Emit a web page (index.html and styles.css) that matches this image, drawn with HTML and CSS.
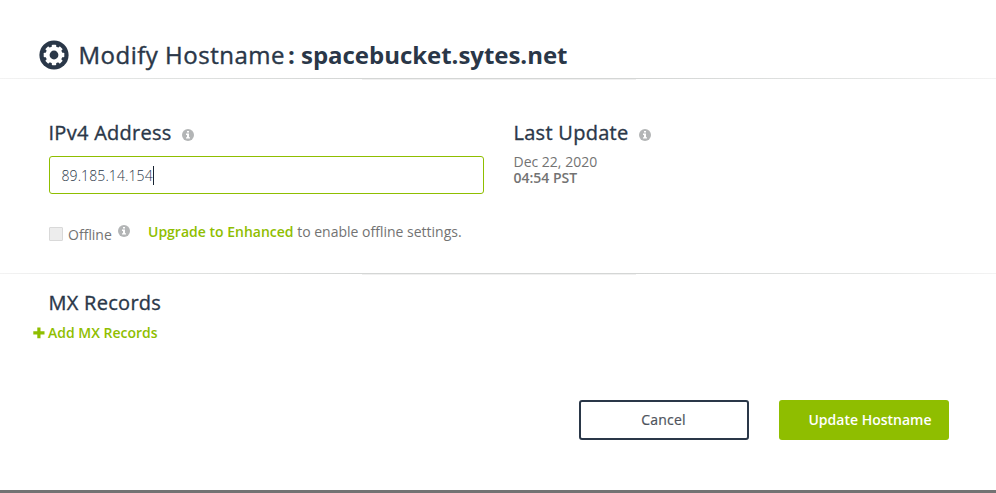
FILE: index.html
```html
<!DOCTYPE html>
<html lang="en">
<head>
<meta charset="utf-8">
<title>Modify Hostname</title>
<link rel="stylesheet" href="styles.css">
</head>
<body>
<svg class="defs" aria-hidden="true">
  <symbol id="info" viewBox="0 0 12 12">
    <circle cx="6" cy="6" r="6" fill="#b3b5b6"/>
    <path d="M5 2h2v1.600H5zM4 4.600h3v3.600h1v1.400H4V8.200h1V6H4z" fill="#fff"/>
  </symbol>
</svg>
<main class="modal">
  <header class="header">
    <svg class="gear" viewBox="0 0 30 30">
      <circle cx="15" cy="15" r="14.600" fill="#2a3748"/>
      <g fill="#fff">
        <circle cx="15" cy="15" r="8.500"/>
        <rect x="12.800" y="4.700" width="4.400" height="20.600" rx=".8"/>
        <rect x="12.800" y="4.700" width="4.400" height="20.600" rx=".8" transform="rotate(45 15 15)"/>
        <rect x="12.800" y="4.700" width="4.400" height="20.600" rx=".8" transform="rotate(90 15 15)"/>
        <rect x="12.800" y="4.700" width="4.400" height="20.600" rx=".8" transform="rotate(135 15 15)"/>
      </g>
      <circle cx="15" cy="15" r="4.400" fill="#2a3748"/>
    </svg>
    <h1 class="title"><span class="label">Modify Hostname</span><b class="host">: spacebucket.sytes.net</b></h1>
  </header>
  <div class="rule"></div>
  <section class="details">
    <div class="address">
      <h2 class="heading"><span class="ipv4">IPv4 Address</span><svg class="info"><use href="#info"/></svg></h2>
      <div class="field"><span class="value">89.185.14.154</span><i class="caret"></i></div>
      <div class="offline">
        <i class="checkbox"></i><span class="offline-label">Offline</span>
        <svg class="info"><use href="#info"/></svg>
        <p class="upgrade"><b class="link">Upgrade to Enhanced</b> to enable offline settings.</p>
      </div>
    </div>
    <div class="update">
      <h2 class="heading"><span class="last">Last Update</span><svg class="info"><use href="#info"/></svg></h2>
      <p class="date">Dec 22, 2020<br><b class="time">04:54 PST</b></p>
    </div>
  </section>
  <div class="rule"></div>
  <section class="mx">
    <h2 class="heading"><span class="mx-title">MX Records</span></h2>
    <div class="add"><svg class="plus" viewBox="0 0 12 12"><path d="M4.300.5h3.200v3.800h4v3.200h-4v3.800H4.300V7.500h-4V4.300h4z" fill="#8fbe00"/></svg><span>Add MX Records</span></div>
  </section>
  <footer class="actions">
    <button class="button cancel">Cancel</button>
    <button class="button submit">Update Hostname</button>
  </footer>
</main>
</body>
</html>
```
FILE: styles.css
```css
* { box-sizing: border-box; }
body { margin: 0; background: #fff; color: #737373; font: 14px/16px "Open Sans", sans-serif; }
.defs { display: none; }
.modal { display: flex; flex-direction: column; height: 493px; border-bottom: 3px solid #737373; overflow: hidden; }
h1, h2, p { margin: 0; }
svg { display: block; flex: none; }
b { font-weight: 600; }
.header { display: flex; height: 78px; padding: 40px 0 0 39px; align-items: flex-start; }
.gear { width: 30px; height: 30px; margin-right: 9.500px; }
.title { font-size: 24px; line-height: 30px; font-weight: 400; color: #2a3748; white-space: nowrap; }
.label { letter-spacing: .5px; -webkit-text-stroke: .4px #2a3748; }
.host { margin-left: 3px; font-weight: 700; letter-spacing: -.03px; }
.rule { height: 1px; flex: none; background: linear-gradient(90deg, #f3f3f3, #e3e5e4 12%, #d4d6d5 36%, #d4d6d5 64%, #e3e5e4 88%, #f3f3f3); }
.rule::after { content: ""; display: block; width: 274px; height: 1px; margin-left: 362px; background: #f0f0f0; transform: translateY(1px); }
.details { display: flex; height: 194px; padding: 43px 0 0 48.500px; }
.address { width: 435px; margin-right: 30px; }
.heading { display: flex; align-items: center; height: 22px; font-size: 20px; line-height: 22px; font-weight: 400; letter-spacing: .28px; -webkit-text-stroke: .35px #2a3748; color: #2a3748; white-space: nowrap; }
.info { width: 12px; height: 12px; margin-left: 10px; position: relative; top: 2px; -webkit-text-stroke: 0; }
.field { display: flex; align-items: center; height: 38px; margin-top: 12px; padding: 1px 12px 0; border: 1px solid #8fbe00; border-radius: 3px; font-weight: 300; letter-spacing: .1px; color: #2a3748; }
.caret { width: 1px; height: 19px; background: #182432; }
.offline { display: flex; height: 20px; margin-top: 30px; }
.checkbox { width: 14px; height: 14px; margin: 3px 5.500px 0 0; border: 1px solid #d9d9d9; background: #ededed; border-radius: 1px; }
.offline-label { width: 44px; margin-top: 3px; }
.offline .info { margin-left: 6px; top: 1px; }
.upgrade { margin-left: 18px; white-space: nowrap; }
.link { color: #8fbe00; }
.date { margin-top: 10px; }
.mx { padding: 18px 0 0 33px; height: 126px; }
.mx .heading { padding-left: 15.500px; }
.add { display: flex; margin-top: 11px; font-weight: 600; color: #8fbe00; }
.plus { width: 12px; height: 12px; margin: 2px 3px 0 0; }
.actions { display: flex; gap: 30px; padding-left: 579px; }
.button { width: 170px; height: 40px; padding: 0; border-radius: 3px; font: 400 14px/16px "Open Sans", sans-serif; }
.cancel { padding-right: 1px; letter-spacing: .2px; -webkit-text-stroke: .2px #4e535c; background: #fff; color: #4e535c; border: 2px solid #2a3748; }
.submit { padding-left: 12px; border: 0; background: #8fbe00; color: #fff; font-weight: 600; }
```
